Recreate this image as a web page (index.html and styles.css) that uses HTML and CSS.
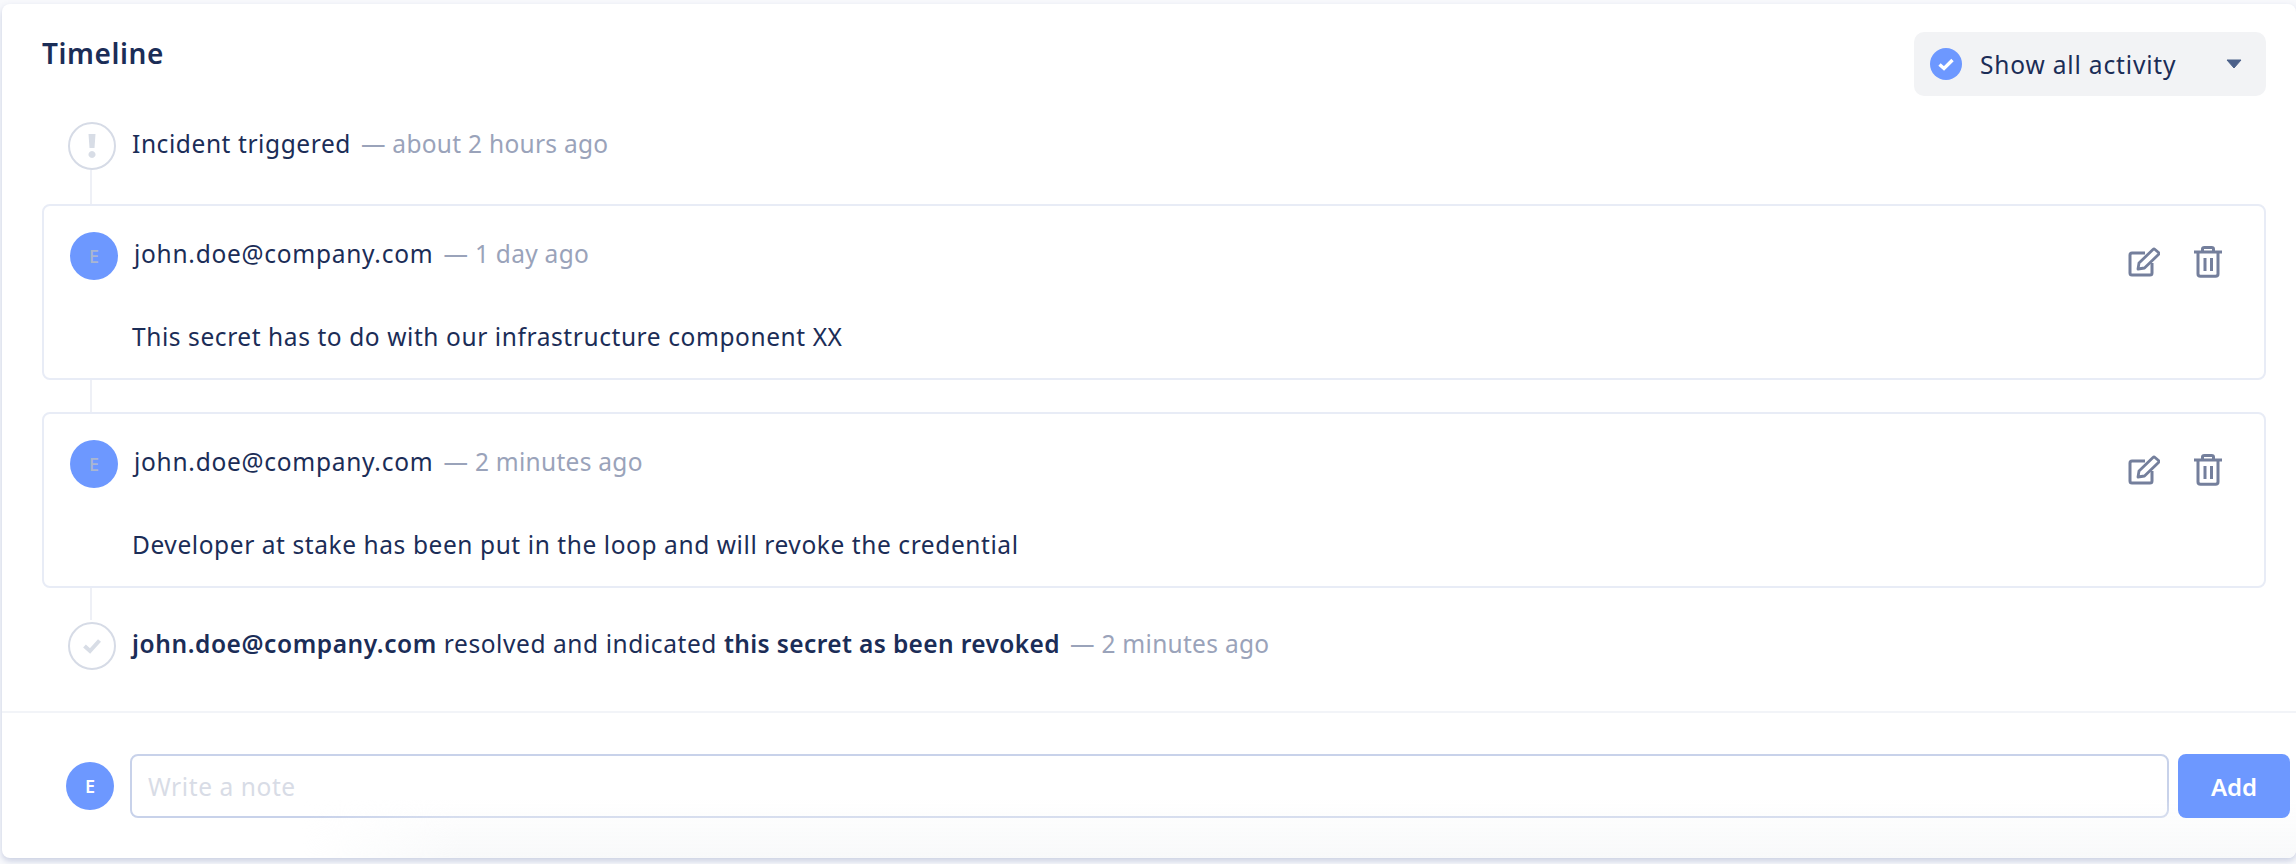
FILE: index.html
```html
<html>
    <head>
        <link rel="stylesheet" href="styles.css">
    </head>
    <body>
        <div class="panel">
            <div class="timeline">
                <div class="timeline-head">
                    <h2 class="title">Timeline</h2>
                    <div class="filter">
                        <span class="filter-check">
                            <svg width="18" height="14" viewBox="0 0 18 14"><path d="M2.5 7.5 L7 11.5 L15.5 3" fill="none" stroke="#fff" stroke-width="3.4"/></svg>
                        </span>
                        <span class="filter-label">Show all activity</span>
                        <svg class="caret" width="16" height="10" viewBox="0 0 16 10"><path d="M1 1 H15 L8 9 Z" fill="#4b6089" stroke="#4b6089" stroke-linejoin="round"/></svg>
                    </div>
                </div>

                <div class="event first">
                    <span class="event-icon">
                        <svg width="10" height="26" viewBox="0 0 10 26"><path d="M1.5 1 H8.5 L7.5 15 H2.5 Z M5 18 a3.5 3.5 0 1 0 0.01 0 Z" fill="#d8dde6"/></svg>
                    </span>
                    <div class="event-text">Incident triggered <span class="time">— about 2 hours ago</span></div>
                </div>
                <div class="connector"></div>

                <div class="card">
                    <div class="card-head">
                        <span class="avatar faded">E</span>
                        <div class="card-meta">john.doe@company.com <span class="time">— 1 day ago</span></div>
                        <div class="actions">
                            <svg width="32" height="32" viewBox="0 0 32 32"><path d="M17 7 H4 Q2 7 2 9 V27 Q2 29 4 29 H22 Q24 29 24 27 V17" fill="none" stroke="#747f9c" stroke-width="3"/><path d="M10 23 L11 17 L25 3.5 Q26 2.5 27 3.5 L30.5 6.5 Q31.5 7.5 30.5 8.5 L16.5 22 Z" fill="none" stroke="#747f9c" stroke-width="2.8" stroke-linejoin="round"/></svg>
                            <svg width="28" height="32" viewBox="0 0 28 32"><path d="M0 6 H28 M8.5 6 V3 Q8.5 1.5 10.500 1.5 H17.500 Q19.500 1.5 19.500 3 V6 M4 6 V28 Q4 30.300 6.500 30.300 H21.500 Q24 30.300 24 28 V6 M11 12 V25 M17.500 12 V25" fill="none" stroke="#747f9c" stroke-width="3"/></svg>
                        </div>
                    </div>
                    <div class="card-body">This secret has to do with our infrastructure component XX</div>
                </div>
                <div class="connector"></div>

                <div class="card">
                    <div class="card-head">
                        <span class="avatar faded">E</span>
                        <div class="card-meta">john.doe@company.com <span class="time">— 2 minutes ago</span></div>
                        <div class="actions">
                            <svg width="32" height="32" viewBox="0 0 32 32"><path d="M17 7 H4 Q2 7 2 9 V27 Q2 29 4 29 H22 Q24 29 24 27 V17" fill="none" stroke="#747f9c" stroke-width="3"/><path d="M10 23 L11 17 L25 3.5 Q26 2.5 27 3.5 L30.5 6.5 Q31.5 7.5 30.5 8.5 L16.5 22 Z" fill="none" stroke="#747f9c" stroke-width="2.8" stroke-linejoin="round"/></svg>
                            <svg width="28" height="32" viewBox="0 0 28 32"><path d="M0 6 H28 M8.5 6 V3 Q8.5 1.5 10.500 1.5 H17.500 Q19.500 1.5 19.500 3 V6 M4 6 V28 Q4 30.300 6.500 30.300 H21.500 Q24 30.300 24 28 V6 M11 12 V25 M17.500 12 V25" fill="none" stroke="#747f9c" stroke-width="3"/></svg>
                        </div>
                    </div>
                    <div class="card-body">Developer at stake has been put in the loop and will revoke the credential</div>
                </div>
                <div class="connector"></div>

                <div class="event last">
                    <span class="event-icon">
                        <svg width="20" height="16" viewBox="0 0 20 16"><path d="M2.500 8 L8 13 L17.500 2.500" fill="none" stroke="#d8dde6" stroke-width="4"/></svg>
                    </span>
                    <div class="event-text"><b>john.doe@company.com</b> resolved and indicated <b class="tight">this secret as been revoked</b> <span class="time">— 2 minutes ago</span></div>
                </div>
            </div>

            <div class="note-form">
                <span class="avatar">E</span>
                <input class="note-input" type="text" placeholder="Write a note">
                <button class="add-btn">Add</button>
            </div>
        </div>
    </body>
</html>
```

FILE: styles.css
```css
html, body {
    margin: 0;
    height: 864px;
    overflow: hidden;
}
body {
    background-color: #f8f9fc;
    color: #1b2d57;
    font-family: "Noto Sans", sans-serif;
    font-size: 24.5px;
    letter-spacing: 0.58px;
}
.panel {
    position: relative;
    height: 854px;
    margin: 4px 0 0 2px;
    background-color: white;
    border-radius: 8px;
    box-shadow: 0 3px 6px rgba(70, 90, 150, 0.26);
    overflow: hidden;
}
/* grey smudge along the bottom edge of the panel */
.panel::after {
    content: "";
    position: absolute;
    left: 300px;
    right: 0;
    bottom: 0;
    height: 60px;
    background: linear-gradient(to bottom, rgba(248, 249, 250, 0), #f8f9fa);
    -webkit-mask-image: linear-gradient(to right, transparent, black 160px);
    pointer-events: none;
}
.timeline {
    padding: 28px 30px 41px 40px;
}
.timeline-head {
    display: flex;
    justify-content: space-between;
    height: 64px;
}
.title {
    margin: 0;
    font-size: 28px;
    font-weight: 600;
    line-height: 42px;
}
.filter {
    display: flex;
    align-items: center;
    width: 352px;
    box-sizing: border-box;
    padding: 0 24px 0 16px;
    background-color: #f2f3f5;
    border-radius: 10px;
}
.filter-check {
    display: flex;
    align-items: center;
    justify-content: center;
    width: 32px;
    height: 32px;
    border-radius: 50%;
    background-color: #6d98ff;
}
.filter-label {
    margin-left: 18px;
    flex: 1;
    letter-spacing: 0.84px;
}
.event {
    display: flex;
    align-items: center;
    margin-left: 26px;
}
.event.first {
    margin-top: 26px;
}
.event.last {
    margin-top: 2px;
}
.event-icon {
    display: flex;
    align-items: center;
    justify-content: center;
    width: 48px;
    height: 48px;
    box-sizing: border-box;
    border: 2px solid #d6dbe6;
    border-radius: 50%;
    flex-shrink: 0;
}
.event-text {
    margin: -6px 0 0 16px;
}
.event-text b {
    font-weight: 600;
}
.event-text b.tight {
    letter-spacing: 0.38px;
}
.time {
    margin-left: 3px;
    color: #9aa3ba;
    letter-spacing: 0.28px;
}
.connector {
    width: 2px;
    height: 32px;
    margin-left: 48px;
    background-color: #eef0f6;
}
.first + .connector {
    height: 34px;
}
.card {
    box-sizing: border-box;
    height: 176px;
    padding: 26px 42px 0 26px;
    border: 2px solid #e8ecf6;
    border-radius: 8px;
}
.card-head {
    display: flex;
    align-items: center;
}
.avatar {
    display: flex;
    align-items: center;
    justify-content: center;
    width: 48px;
    height: 48px;
    border-radius: 50%;
    background-color: #6d98ff;
    color: white;
    font-size: 18px;
    font-weight: 600;
    letter-spacing: 0;
    flex-shrink: 0;
}
.avatar.faded {
    color: #aab6d0;
    font-weight: 500;
}
.card-meta {
    margin-left: 16px;
    flex: 1;
    position: relative;
    top: -3px;
    letter-spacing: 0.73px;
}
.actions {
    display: flex;
    gap: 34px;
    margin-top: 12px;
}
.card-body {
    margin: 39px 0 0 62px;
    line-height: 36px;
}
.note-form {
    display: flex;
    gap: 9px;
    align-items: center;
    padding: 41px 6px 40px 64px;
    border-top: 2px solid #f2f4f8;
}
.note-form .avatar {
    margin-right: 7px;
}
.note-input {
    flex: 1;
    height: 64px;
    box-sizing: border-box;
    padding: 0 16px;
    border: 2px solid #c8d2ea;
    border-radius: 8px;
    background-color: transparent;
    color: #1b2d57;
    font-family: "Noto Sans", sans-serif;
    font-size: 24.5px;
    letter-spacing: 0.58px;
}
.note-input::placeholder {
    color: #d8dce6;
}
.add-btn {
    position: relative;
    z-index: 1;
    width: 112px;
    height: 64px;
    border: none;
    border-radius: 8px;
    background-color: #6d98ff;
    color: white;
    font-family: "Noto Sans", sans-serif;
    font-size: 24px;
    font-weight: 600;
}
```
